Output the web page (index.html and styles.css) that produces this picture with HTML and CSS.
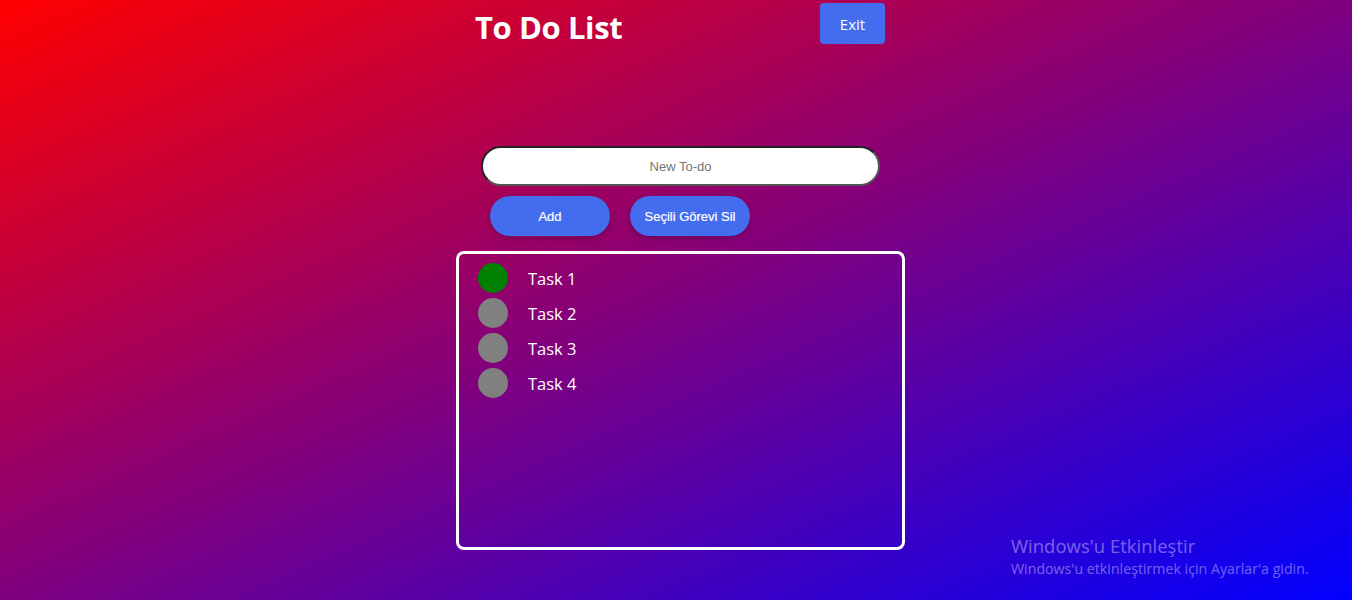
FILE: index.html
```html
<!DOCTYPE html>
<html lang="tr">
<head>
<meta charset="utf-8">
<title>To Do List</title>
<link rel="stylesheet" href="styles.css">
</head>
<body>
<div class="page">
  <header class="header">
    <h1 class="title">To Do List</h1>
    <button class="exit">Exit</button>
  </header>
  <main class="main">
    <input class="new-todo" type="text" placeholder="New To-do">
    <div class="actions">
      <button class="pill">Add</button>
      <button class="pill">Seçili Görevi Sil</button>
    </div>
    <ul class="list">
      <li class="task"><span class="dot done"></span><span class="label">Task 1</span></li>
      <li class="task"><span class="dot"></span><span class="label">Task 2</span></li>
      <li class="task"><span class="dot"></span><span class="label">Task 3</span></li>
      <li class="task"><span class="dot"></span><span class="label">Task 4</span></li>
    </ul>
  </main>
  <div class="watermark">
    <div class="wm-title">Windows'u Etkinleştir</div>
    <div class="wm-sub">Windows'u etkinleştirmek için Ayarlar'a gidin.</div>
  </div>
</div>
</body>
</html>
```
FILE: styles.css
```css
html, body {
  margin: 0;
  padding: 0;
}
body {
  width: 1352px;
  height: 600px;
  overflow: hidden;
  background: linear-gradient(to bottom right, #ff0000, #0000ff);
  font-family: "Open Sans", "Noto Sans", sans-serif;
  color: #fff;
}
.page {
  position: relative;
  height: 600px;
}
.header {
  display: flex;
  align-items: flex-start;
  padding-left: 475px;
  padding-top: 3px;
}
.title {
  margin: 4px 0 0 0;
  font-size: 31px;
  font-weight: 700;
  line-height: 40px;
  width: 345px;
  letter-spacing: -0.4px;
}
.exit {
  width: 65px;
  height: 41px;
  border: none;
  border-radius: 4px;
  background: #436cef;
  color: #fff;
  font-family: "Open Sans", sans-serif;
  font-size: 15px;
  cursor: pointer;
}
.main {
  display: flex;
  flex-direction: column;
  align-items: flex-start;
  padding-left: 456px;
  padding-top: 99px;
}
.new-todo {
  box-sizing: border-box;
  margin-left: 25px;
  width: 399px;
  height: 40px;
  border: 2px solid #555;
  border-top-color: #222;
  border-left-color: #222;
  border-radius: 20px;
  background: #fff;
  text-align: center;
  font-family: "Liberation Sans", Arial, sans-serif;
  font-size: 13px;
  outline: none;
}
.new-todo::placeholder {
  color: #757575;
}
.actions {
  display: flex;
  gap: 20px;
  margin-top: 10px;
  margin-left: 34px;
}
.pill {
  width: 120px;
  height: 40px;
  border: none;
  border-radius: 20px;
  background: #436cef;
  color: #fff;
  font-family: "Liberation Sans", Arial, sans-serif;
  font-size: 13px;
  font-weight: 400;
  -webkit-text-stroke: 0.2px #fff;
  box-shadow: 0 2px 6px rgba(0, 0, 0, 0.25);
  cursor: pointer;
}
.list {
  box-sizing: border-box;
  list-style: none;
  margin: 15px 0 0 0;
  padding: 9px 0 0 19px;
  width: 449px;
  height: 299px;
  border: 3px solid #fff;
  border-radius: 8px;
  display: flex;
  flex-direction: column;
  gap: 5px;
}
.task {
  display: flex;
  align-items: center;
  height: 30px;
  gap: 20px;
}
.dot {
  width: 30px;
  height: 30px;
  border-radius: 50%;
  background: #808080;
  flex: none;
}
.dot.done {
  background: #008000;
}
.label {
  font-size: 16.5px;
}
.watermark {
  position: absolute;
  left: 1011px;
  top: 534px;
  color: rgba(255, 255, 255, 0.4);
}
.wm-title {
  font-size: 18.5px;
  line-height: 24px;
}
.wm-sub {
  font-size: 14.2px;
  line-height: 21px;
}
```
